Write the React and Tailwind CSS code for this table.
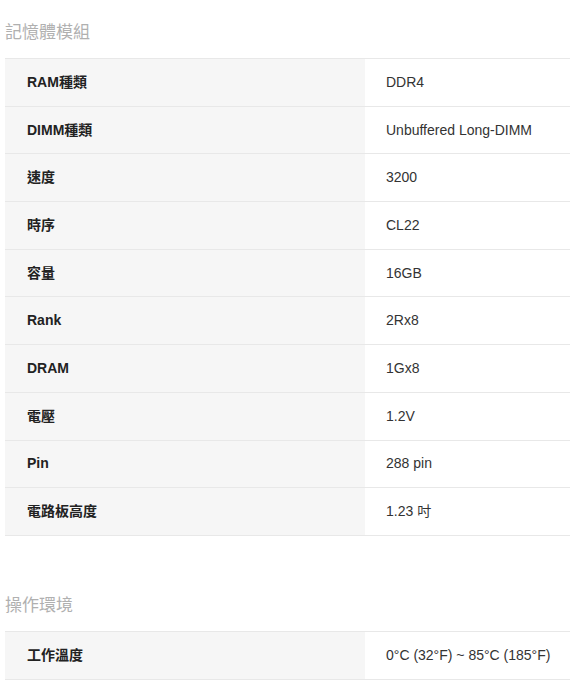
import React from "react";

const memory = [
  ["RAM種類", "DDR4"],
  ["DIMM種類", "Unbuffered Long-DIMM"],
  ["速度", "3200"],
  ["時序", "CL22"],
  ["容量", "16GB"],
  ["Rank", "2Rx8"],
  ["DRAM", "1Gx8"],
  ["電壓", "1.2V"],
  ["Pin", "288 pin"],
  ["電路板高度", "1.23 吋"],
];

const env = [["工作溫度", "0°C (32°F) ~ 85°C (185°F)"]];

function Section({ title, rows, className = "" }) {
  return (
    <section className={className}>
      <h2 className="h-[58px] flex items-center pt-[7px] text-[17px] font-normal text-[#b0b0b0]">
        {title}
      </h2>
      <div className="border-t border-[#e8e8e8]">
        {rows.map(([k, v]) => (
          <div
            key={k}
            className="grid grid-cols-[360px_1fr] h-[47.7px] border-b border-[#e8e8e8]"
          >
            <div className="bg-[#f6f6f6] flex items-center pl-[22px] text-[14px] font-bold text-[#222222]">
              {k}
            </div>
            <div className="flex items-center pl-[21px] text-[14px] text-[#333333] whitespace-nowrap">
              {v}
            </div>
          </div>
        ))}
      </div>
    </section>
  );
}

export default function App() {
  return (
    <div
      className="w-[570px] min-h-[695px] bg-white pl-[5px] overflow-hidden"
      style={{ fontFamily: '"Liberation Sans", Arial, "Noto Sans CJK TC", sans-serif' }}
    >
      <Section title="記憶體模組" rows={memory} />
      <Section title="操作環境" rows={env} className="mt-[37px]" />
    </div>
  );
}
